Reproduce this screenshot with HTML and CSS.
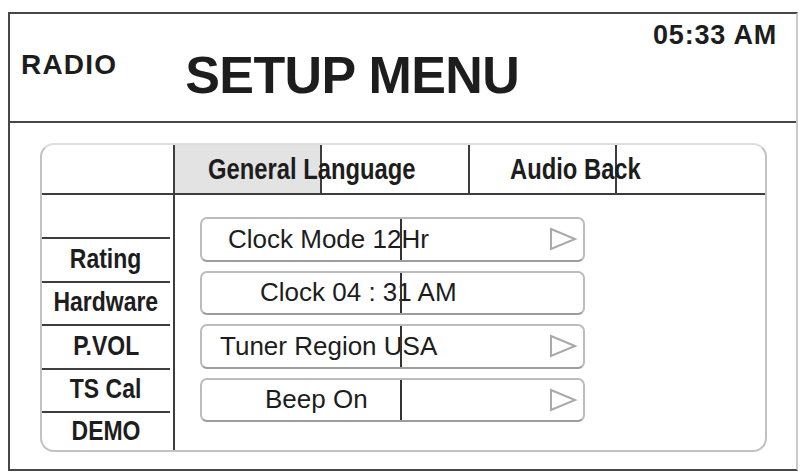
FILE: index.html
```html
<!DOCTYPE html>
<html>

<head>
    <title>Setup Menu</title>
    <link rel="stylesheet" href="styles.css">
</head>
<body>
    <div class="screen">
        <header class="top-bar">
            <span class="source">RADIO</span>
            <h1 class="title">SETUP MENU</h1>
            <span class="clock">05:33 AM</span>
        </header>
        <section class="panel">
            <div class="tabs">
                <div class="tabs-corner"></div>
                <div class="tab tab-general"><span class="tab-label">General Language</span></div>
                <div class="tab tab-audio"><span class="tab-label">Audio Back</span></div>
            </div>
            <div class="panel-body">
                <nav class="side">
                    <div class="side-item"><span class="side-label">Rating</span></div>
                    <div class="side-item"><span class="side-label">Hardware</span></div>
                    <div class="side-item"><span class="side-label">P.VOL</span></div>
                    <div class="side-item"><span class="side-label">TS Cal</span></div>
                    <div class="side-item"><span class="side-label">DEMO</span></div>
                </nav>
                <div class="options">
                    <div class="opt opt-mode">
                        <span class="opt-label">Clock Mode 12Hr</span>
                        <svg class="opt-arrow" viewBox="0 0 30 24"><polygon points="3,2 27,12 3,22"/></svg>
                    </div>
                    <div class="opt opt-clock">
                        <span class="opt-label">Clock 04 : 31 AM</span>
                    </div>
                    <div class="opt opt-region">
                        <span class="opt-label">Tuner Region USA</span>
                        <svg class="opt-arrow" viewBox="0 0 30 24"><polygon points="3,2 27,12 3,22"/></svg>
                    </div>
                    <div class="opt opt-beep">
                        <span class="opt-label">Beep On</span>
                        <svg class="opt-arrow" viewBox="0 0 30 24"><polygon points="3,2 27,12 3,22"/></svg>
                    </div>
                </div>
            </div>
        </section>
    </div>
</body>
</html>
```

FILE: styles.css
```css
* {
    box-sizing: border-box;
}
body {
    margin: 0;
    background: #fff;
    color: #1d1d1d;
    font-family: "Liberation Sans", Arial, sans-serif;
}
.screen {
    display: flex;
    flex-direction: column;
    width: 790px;
    height: 459px;
    margin: 12px 0 0 8px;
    border: 2px solid #474747;
    border-right-color: #c9c9c9;
}

/* header: source, title, time */
.top-bar {
    display: flex;
    align-items: flex-start;
    height: 109px;
    padding: 0 19px 0 11px;
    border-bottom: 2px solid #474747;
}
.source {
    margin-top: 37px;
    font-size: 28px;
    font-weight: bold;
    line-height: 1;
    letter-spacing: 1.2px;
}
.title {
    margin: 35px 0 0 68px;
    font-size: 52px;
    font-weight: bold;
    line-height: 1;
    letter-spacing: -0.6px;
}
.clock {
    margin: 8px 0 0 auto;
    font-size: 27px;
    font-weight: bold;
    line-height: 1;
    letter-spacing: 0.8px;
}

/* menu panel */
.panel {
    flex: 1;
    display: flex;
    flex-direction: column;
    margin: 20px 29px 17px 30px;
    border: 2px solid #c2c2c2;
    border-top-color: #dedede;
    border-radius: 14px;
}
.tabs {
    display: flex;
    height: 50px;
    border-bottom: 2px solid #3d3d3d;
}
.tabs-corner {
    width: 133px;
    border-right: 2px solid #3d3d3d;
}
.tab {
    position: relative;
    display: flex;
    align-items: center;
    font-size: 29px;
    font-weight: bold;
    white-space: nowrap;
}
.tab::after {
    content: "";
    position: absolute;
    top: 0;
    bottom: 0;
    left: 145px;
    width: 2px;
    background: #3d3d3d;
}
/* condensed bold labels */
.tab-label,
.side-label {
    display: inline-block;
    transform: scaleX(0.82);
}
.tab-label {
    position: relative;
    z-index: 1;
    transform-origin: left center;
}
.tab-general {
    width: 295px;
    padding-left: 33px;
    border-right: 2px solid #3d3d3d;
}
.tab-general::before {
    content: "";
    position: absolute;
    top: 0;
    bottom: 0;
    left: 0;
    width: 145px;
    background: #e3e3e3;
}
.tab-audio {
    flex: 1;
    padding-left: 40px;
}

.panel-body {
    flex: 1;
    display: flex;
}
.side {
    display: flex;
    flex-direction: column;
    width: 133px;
    padding-top: 42px;
    border-right: 2px solid #3d3d3d;
}
.side-item {
    display: flex;
    align-items: center;
    justify-content: center;
    height: 43.5px;
    margin-right: 3px;
    padding-bottom: 2px;
    border-top: 2px solid #3d3d3d;
    font-size: 28px;
    font-weight: bold;
    white-space: nowrap;
}
.side-item:last-child {
    flex: 1;
    height: auto;
}

.options {
    flex: 1;
    display: flex;
    flex-direction: column;
    gap: 9px;
    padding: 22px 0 0 25px;
}
.opt {
    position: relative;
    display: flex;
    align-items: center;
    width: 385px;
    height: 44.5px;
    border: 2px solid #bcbcbc;
    border-bottom-color: #9d9d9d;
    border-radius: 7px;
    font-size: 26px;
    white-space: nowrap;
}
.opt::after {
    content: "";
    position: absolute;
    top: 0;
    bottom: 0;
    left: 198px;
    width: 2px;
    background: #333;
}
.opt-mode .opt-label { padding-left: 26px; }
.opt-clock .opt-label { padding-left: 58px; }
.opt-region .opt-label { padding-left: 18px; }
.opt-beep .opt-label { padding-left: 63px; }
.opt-arrow {
    width: 30px;
    height: 24px;
    margin: 0 5px 0 auto;
    fill: none;
    stroke: #a9a9a9;
    stroke-width: 2;
}
```
